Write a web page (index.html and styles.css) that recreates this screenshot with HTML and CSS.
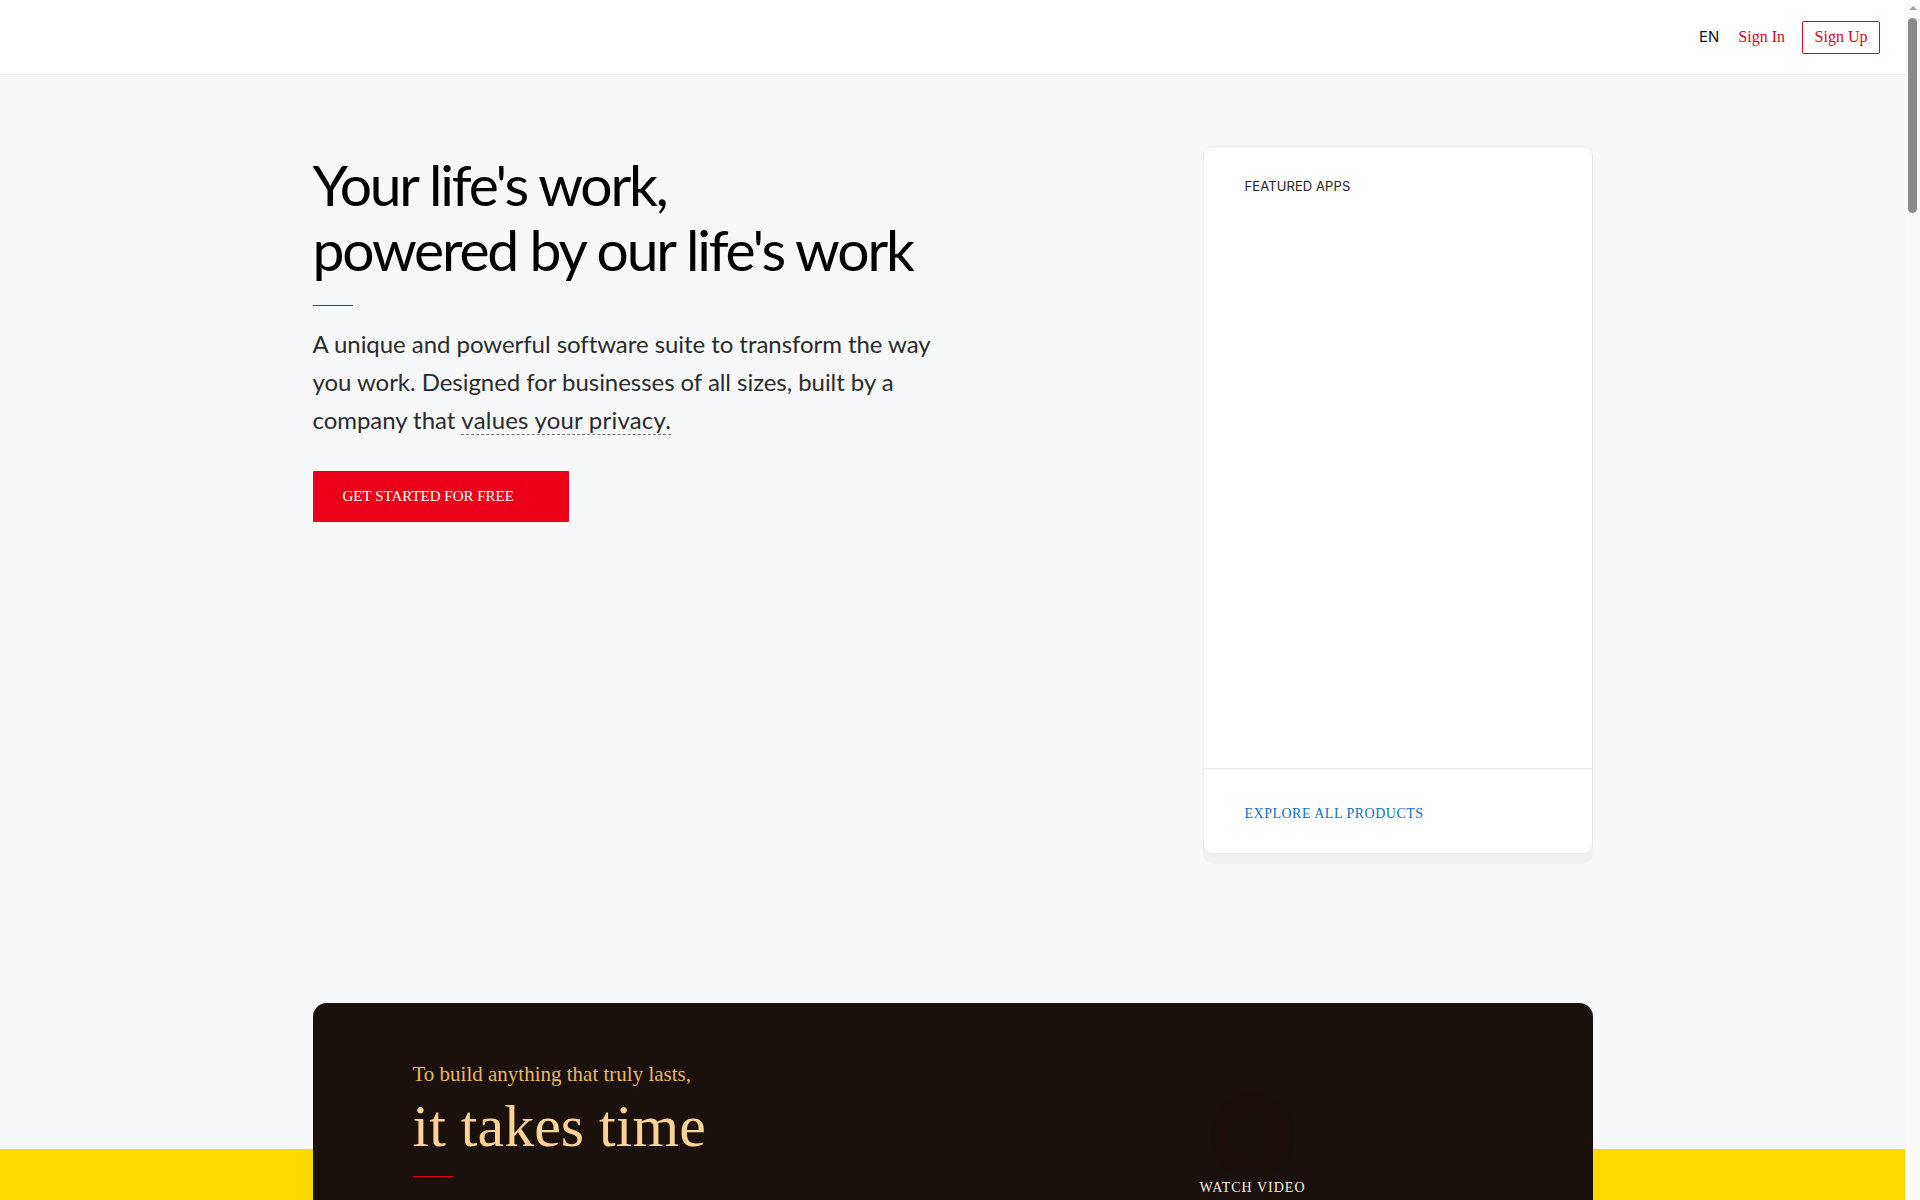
FILE: index.html
```html
<!DOCTYPE html>
<html lang="en">
<head>
<meta charset="utf-8">
<title>Zoho</title>
<link rel="stylesheet" href="styles.css">
</head>
<body>
<header class="topbar">
  <nav class="topnav">
    <span class="lang">EN</span>
    <a class="signin" href="#">Sign In</a>
    <a class="signup" href="#">Sign Up</a>
  </nav>
</header>
<main class="page">
  <section class="hero">
    <div class="hero-text">
      <h1 class="hero-title">Your life's work,<br>powered by our life's work</h1>
      <div class="hero-rule"></div>
      <p class="hero-lead">A unique and powerful software suite to transform the way you work. Designed for businesses of all sizes, built by a company that <a class="privacy" href="#">values your privacy.</a></p>
      <a class="cta" href="#">GET STARTED FOR FREE</a>
    </div>
    <aside class="featured">
      <div class="featured-body">
        <div class="featured-label">FEATURED APPS</div>
      </div>
      <div class="featured-foot">
        <a class="explore" href="#">EXPLORE ALL PRODUCTS</a>
      </div>
    </aside>
  </section>
  <section class="story-wrap">
    <div class="story">
      <div class="story-text">
        <p class="story-kicker">To build anything that truly lasts,</p>
        <h2 class="story-title">it takes time</h2>
        <div class="story-rule"></div>
      </div>
      <div class="story-video">
        <div class="play-ring"></div>
        <span class="watch">WATCH VIDEO</span>
      </div>
    </div>
  </section>
</main>
<div class="scrollbar" aria-hidden="true">
  <div class="scroll-up"></div>
  <div class="scroll-thumb"></div>
</div>
</body>
</html>
```

FILE: styles.css
```css
* { box-sizing: border-box; }
html, body { margin: 0; padding: 0; }
body {
  background: #f7f8fa;
  font-family: "Liberation Serif", serif;
  color: #000;
  padding-right: 15px;
}
a { text-decoration: none; }

/* header */
.topbar {
  height: 75px;
  background: #fff;
  border-bottom: 1px solid #e7e9ee;
  display: flex;
  justify-content: flex-end;
  align-items: center;
  padding-right: 25px;
}
.topnav {
  display: flex;
  align-items: center;
}
.lang {
  font-family: Inter, "Noto Sans", sans-serif;
  font-size: 15px;
  color: #111;
  margin-right: 19px;
  padding-bottom: 1px;
}
.signin {
  font-family: "Liberation Serif", serif;
  font-size: 16px;
  color: #e0001b;
  margin-right: 17px;
}
.signup {
  font-family: "Liberation Serif", serif;
  font-size: 16px;
  color: #e0001b;
  border: 1px solid #e0001b;
  border-radius: 2px;
  height: 33px;
  width: 78px;
  display: flex;
  align-items: center;
  justify-content: center;
}

/* hero */
.hero {
  width: 1280px;
  margin: 0 auto;
  padding-top: 71px;
  display: flex;
  justify-content: space-between;
  align-items: flex-start;
}
.hero-text { width: 700px; padding-top: 6px; }
.hero-title {
  margin: 0;
  font-family: Lato, "Open Sans", sans-serif;
  font-weight: 400;
  font-size: 57px;
  line-height: 65px;
  letter-spacing: -2.2px;
  color: #000;
}
.hero-rule {
  width: 40px;
  height: 1px;
  background: #d3001b;
  margin-top: 23px;
}
.hero-lead {
  margin: 19px 0 0;
  width: 640px;
  font-family: Lato, "Open Sans", sans-serif;
  font-size: 24px;
  line-height: 38px;
  letter-spacing: -0.05px;
  color: #2b2b2b;
}
.privacy {
  color: #2b2b2b;
  letter-spacing: 0.2px;
  text-decoration: underline dashed #777;
  text-decoration-thickness: 1px;
  text-underline-offset: 5px;
}
.cta {
  margin-top: 32px;
  display: flex;
  align-items: center;
  height: 51px;
  width: 256px;
  padding-left: 30px;
  background: #ec0017;
  color: #fff;
  font-family: "Liberation Serif", serif;
  font-size: 15px;
  border-radius: 1px;
}

/* featured card */
.featured {
  width: 390px;
  height: 708px;
  background: #fff;
  border: 1px solid #e6e9ee;
  border-radius: 10px;
  box-shadow: 0 10px 0 #eff0f2;
  display: flex;
  flex-direction: column;
}
.featured-body {
  flex: 1;
  padding: 31px 41px;
}
.featured-label {
  font-family: Inter, "Noto Sans", sans-serif;
  font-size: 13px;
  letter-spacing: 0.1px;
  color: #222;
}
.featured-foot {
  height: 85px;
  border-top: 1px solid #e6e9ee;
  display: flex;
  align-items: center;
  padding: 6px 0 0 41px;
}
.explore {
  font-family: "Liberation Serif", serif;
  font-size: 14px;
  letter-spacing: 0.5px;
  color: #0b6fc4;
}

/* story */
.story-wrap {
  margin-top: 149px;
  background: linear-gradient(to bottom, transparent 146px, #ffd800 146px);
}
.story {
  width: 1280px;
  height: 560px;
  margin: 0 auto;
  background: #1a110d;
  border-radius: 14px 14px 0 0;
  display: flex;
  padding: 58px 100px 0;
}
.story-text { width: 787px; }
.story-kicker {
  margin: 0;
  font-family: "Liberation Serif", serif;
  font-size: 21px;
  line-height: 26px;
  color: #e6b766;
}
.story-title {
  margin: 6px 0 0;
  font-family: "Liberation Serif", serif;
  font-weight: 400;
  font-size: 60px;
  line-height: 66px;
  color: #fdd293;
}
.story-rule {
  width: 40px;
  height: 1px;
  background: #e0001b;
  margin-top: 17px;
}
.story-video {
  display: flex;
  flex-direction: column;
  align-items: flex-start;
  padding-top: 46px;
}
.play-ring {
  width: 56px;
  height: 56px;
  margin-left: 25px;
  border-radius: 50%;
  background: #1a110d;
  box-shadow: 0 0 10px 3px rgba(40, 14, 8, 0.5);
}
.watch {
  margin-top: 17px;
  font-family: "Liberation Serif", serif;
  font-size: 14px;
  letter-spacing: 1px;
  color: #f4f0ea;
}

/* window scrollbar as captured in the screenshot */
.scrollbar {
  position: fixed;
  top: 0;
  right: 0;
  width: 15px;
  height: 100vh;
  background: #fafafa;
}
.scroll-up {
  width: 0;
  height: 0;
  margin: 6px auto 0;
  border-left: 4px solid transparent;
  border-right: 4px solid transparent;
  border-bottom: 4px solid #a3a3a3;
}
.scroll-thumb {
  width: 9px;
  height: 195px;
  margin: 8px 0 0 3px;
  border-radius: 5px;
  background: #8a8a8a;
}
```
